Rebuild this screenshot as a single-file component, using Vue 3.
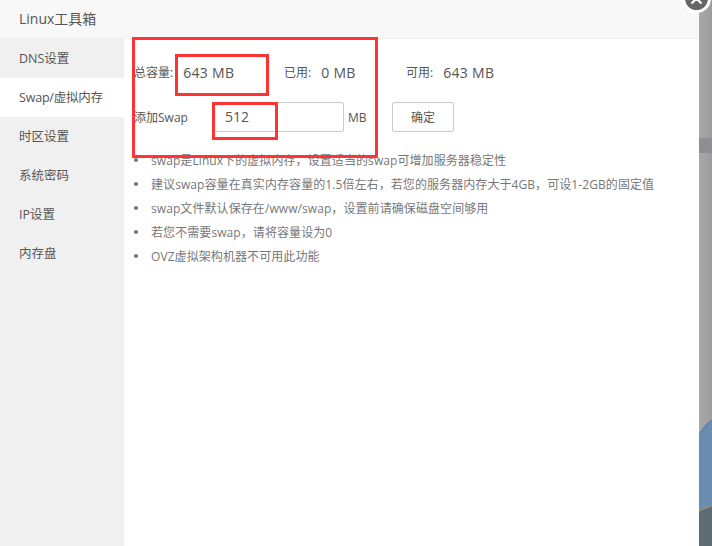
<script setup>
const tabs = ['DNS设置', 'Swap/虚拟内存', '时区设置', '系统密码', 'IP设置', '内存盘']
const notes = [
  'swap是Linux下的虚拟内存，设置适当的swap可增加服务器稳定性',
  '建议swap容量在真实内存容量的1.5倍左右，若您的服务器内存大于4GB，可设1-2GB的固定值',
  'swap文件默认保存在/www/swap，设置前请确保磁盘空间够用',
  '若您不需要swap，请将容量设为0',
  'OVZ虚拟架构机器不可用此功能'
]
</script>

<template>
  <div class="page">
    <section class="modal">
      <header class="title">Linux工具箱</header>
      <div class="body">
        <nav class="side">
          <div v-for="(t, i) in tabs" :key="t" class="tab" :class="{ active: i === 1 }">{{ t }}</div>
        </nav>
        <main class="content">
          <div class="stats">
            <div class="stat s1"><span class="lab">总容量:</span><span class="val">643 MB</span></div>
            <div class="stat s2"><span class="lab">已用:</span><span class="val">0 MB</span></div>
            <div class="stat s3"><span class="lab">可用:</span><span class="val">643 MB</span></div>
          </div>
          <div class="form">
            <span class="flab">添加Swap</span>
            <div class="input">512</div>
            <span class="unit">MB</span>
            <button class="btn">确定</button>
          </div>
          <ul class="notes">
            <li v-for="n in notes" :key="n">{{ n }}</li>
          </ul>
        </main>
      </div>
    </section>
    <aside class="backdrop">
      <div class="band"></div>
      <svg class="globe" viewBox="0 0 13 128" width="13" height="128">
        <path d="M0 17 Q5 7 13 2 V88 L0 93 Z" fill="#6a8cb0"/>
        <path d="M0 93 L13 88 V128 H0 Z" fill="#5f6b72"/>
        <path d="M0 93 L13 88" stroke="#b08a50" stroke-width="1" fill="none"/>
        <path d="M0 17 Q5 7 13 2" stroke="#4f78a8" stroke-width="1" fill="none"/>
      </svg>
    </aside>
    <div class="close"><svg viewBox="0 0 23 23" width="23" height="23"><path d="M6.5 6.5 L16.5 16.5 M16.5 6.5 L6.5 16.5" stroke="#fff" stroke-width="2.2" fill="none"/></svg></div>
    <div class="mark m1"></div>
    <div class="mark m2"></div>
    <div class="mark m3"></div>
  </div>
</template>

<style scoped>
.page { position: relative; display: flex; width: 712px; height: 546px; overflow: hidden; font-family: "Open Sans", "Noto Sans CJK SC", sans-serif; color: #555; }
.modal { width: 699px; display: flex; flex-direction: column; background: #fff; }
.title { height: 38px; line-height: 38px; padding-left: 19px; background: #f8f8f8; border-bottom: 1px solid #eee; font-size: 14px; color: #555; }
.body { flex: 1; display: flex; }
.side { width: 124px; background: #f0f0f0; }
.tab { height: 39px; line-height: 39px; padding-left: 19px; font-size: 12.5px; color: #555; }
.tab.active { background: #fff; letter-spacing: -.2px; }
.content { flex: 1; padding: 0 0 0 10px; }
.stats { display: flex; height: 30px; margin-top: 18px; align-items: center; font-size: 12px; white-space: nowrap; }
.stat { display: flex; align-items: center; }
.s1 { width: 150px; }
.s2 { width: 122px; }
.lab { color: #555; }
.val { font-size: 14px; margin-left: 10px; color: #555; letter-spacing: .3px; }
.form { display: flex; align-items: center; margin-top: 15px; height: 30px; font-size: 12px; }
.flab { width: 78px; white-space: nowrap; }
.input { width: 118px; height: 28px; line-height: 28px; border: 1px solid #ccc; border-radius: 2px; padding-left: 12px; font-size: 14px; }
.unit { margin-left: 4px; width: 44px; font-size: 12px; }
.btn { width: 62px; height: 30px; background: #fff; border: 1px solid #ccc; border-radius: 2px; font: inherit; color: #555; padding: 0; }
.notes { list-style: none; margin: 17px 0 0; padding: 0; font-size: 12px; color: #777; letter-spacing: .08px; }
.notes li { height: 24px; line-height: 24px; padding-left: 17px; position: relative; white-space: nowrap; }
.notes li::before { content: ""; position: absolute; left: 0; top: 9px; width: 4px; height: 4px; border-radius: 50%; background: #777; }
.backdrop { position: relative; flex: 1; background: linear-gradient(90deg, #a8a8a8, #9c9c9c); }
.band { position: absolute; left: 0; right: 0; top: 138px; height: 15px; background: #8e8e94; }
.globe { position: absolute; left: 0; top: 418px; display: block; }
.close { position: absolute; left: 682px; top: -16px; width: 23px; height: 23px; border-radius: 50%; background: #666; border: 3px solid #fff; display: flex; }
.mark { position: absolute; border: 3px solid #f33; box-sizing: border-box; pointer-events: none; }
.m1 { left: 132px; top: 37px; width: 246px; height: 121px; }
.m2 { left: 175px; top: 54px; width: 94px; height: 42px; }
.m3 { left: 212px; top: 102px; width: 66px; height: 38px; }
</style>
